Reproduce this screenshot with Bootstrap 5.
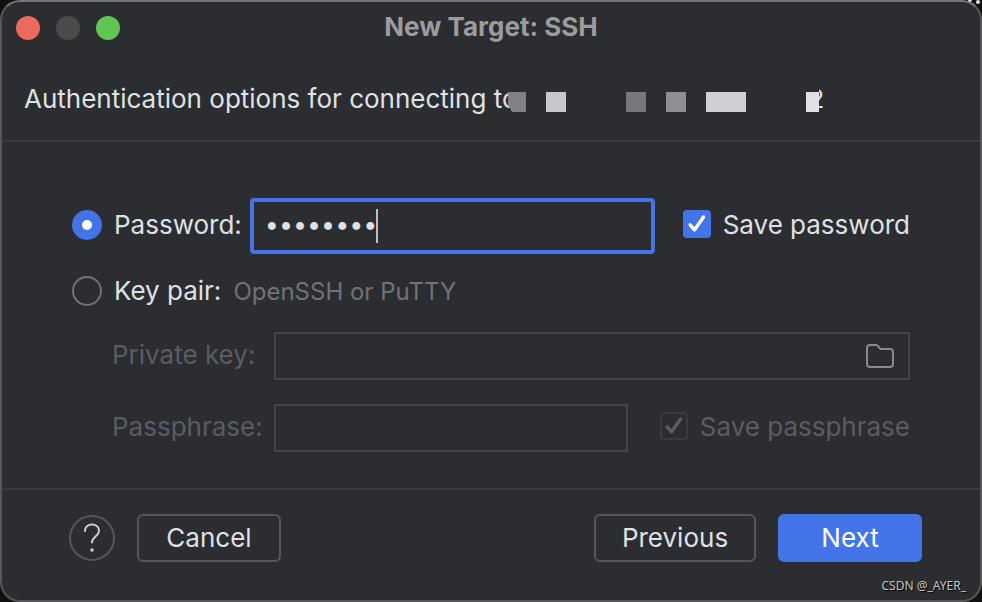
<!DOCTYPE html>
<html lang="en" data-bs-theme="dark">
<head>
<meta charset="utf-8">
<meta name="viewport" content="width=device-width, initial-scale=1">
<title>New Target: SSH</title>
<link href="https://cdn.jsdelivr.net/npm/bootstrap@5.3.0/dist/css/bootstrap.min.css" rel="stylesheet">
<style>
  :root {
    --win: #2b2d30;
    --line: #393b40;
    --frame: #55575a;
    --text: #dfe1e5;
    --muted: #6f737a;
    --off: #5a5d63;
    --blue: #4375e8;
  }
  body { background: #111113; color: var(--text); font: 26px/32px Inter, "Liberation Sans", sans-serif; }
  .dialog { background: var(--win); border: 2px solid var(--frame); border-top-color: #747678; border-radius: 20px; }
  .desk-specks { width: 14px; height: 8px; }
  .titlebar { height: 52px; padding: 0 14px; }
  .titlebar h1 { font-size: 26px; line-height: 32px; font-weight: 700; color: #9b9c9e; padding-bottom: 2px; }
  .light { width: 24px; height: 24px; border: 0; padding: 0; border-radius: 50%; }
  .light-close { background: #ed6a5e; }
  .light-min { background: #4a4b4d; }
  .light-zoom { background: #61c554; }
  .spacer { width: 104px; }
  .intro { padding: 26px 22px 20px; border-bottom: 2px solid var(--line); height: 88px; line-height: 38px; }
  .intro h2 { font-size: 26px; line-height: 38px; font-weight: 400; color: var(--text); }
  .mosaic { margin-left: -10px; }
  .tail { margin-left: -11px; }
  .options { padding: 56px 70px 36px; }
  .options label { padding-bottom: 2px; }
  .options .choice { width: 30px; height: 30px; margin: 0 0 2px; border: 2px solid var(--muted); background-color: transparent; }
  .options .choice:checked { border-color: var(--blue); background-color: var(--blue); background-size: 20px 20px; }
  .tick { width: 28px; height: 28px; appearance: none; border-radius: 4px; border: 2px solid var(--line); margin: 0; }
  .tick-on { background: var(--blue); border-color: var(--blue); }
  .tick-box { width: 28px; height: 28px; }
  .tick-box svg { pointer-events: none; }
  .tick-box-up { margin-bottom: 4px; }
  .field { background: transparent; color: var(--text); border: 2px solid #43454a; height: 48px; min-width: 0; outline: 0; }
  .field-focus { border: 4px solid var(--blue); border-radius: 4px; height: 56px; padding: 0 12px 4px 11px; font-size: 25px; }
  .caret { left: 126px; width: 2px; height: 34px; background: #bcbec4; }
  .gap-label { gap: 12px; }
  .save-password { padding-left: 28px; }
  .key-pair { margin: 21px 0 23px; }
  .hint { font-size: 24px; color: var(--muted); }
  .off { color: var(--off); }
  .key-row { padding-left: 40px; }
  .key-label { width: 162px; }
  .footer { border-top: 2px solid var(--line); padding: 24px 14px 6px 67px; }
  .help { width: 46px; height: 46px; border: 2px solid #54565a; border-radius: 50%; background: transparent; padding: 0; }
  .act { height: 48px; width: 144px; padding: 0; font-size: 26px; line-height: 32px; border: 2px solid #54565a; border-radius: 6px; color: var(--text); }
  .act-wide { width: 162px; }
  .act-main { background: var(--blue); border-color: var(--blue); color: #fff; }
  .actions { padding-right: 44px; gap: 22px; }
  .sign { font: 12px/16px "Noto Sans", sans-serif; color: #c4c5c6; text-shadow: 1px 1px 1px #000; }
</style>
</head>
<body>
<svg class="desk-specks position-absolute top-0 end-0" viewBox="0 0 14 8" aria-hidden="true"><circle cx="2" cy="0" r="2" fill="#ddd"/><circle cx="10" cy="2" r="2" fill="#ddd"/></svg>
<main class="dialog min-vh-100 d-flex flex-column">
  <header class="titlebar d-flex align-items-center justify-content-between">
    <div class="spacer d-flex justify-content-between">
      <button class="light light-close" type="button" aria-label="Close"></button>
      <button class="light light-min" type="button" aria-label="Minimize" disabled></button>
      <button class="light light-zoom" type="button" aria-label="Zoom"></button>
    </div>
    <h1 class="m-0">New Target: SSH</h1>
    <div class="spacer"></div>
  </header>

  <section class="intro d-flex">
    <h2 class="m-0 text-nowrap">Authentication options for connecting to</h2>
    <svg class="mosaic position-relative z-1 flex-shrink-0" width="312" height="36" viewBox="0 0 312 36" aria-hidden="true">
      <path d="M0 12h18v20H4L0 25z" fill="#808184"/>
      <path d="M38 12h20v20H38z" fill="#c6c7cb"/>
      <path d="M118 12h20v20h-20z" fill="#77787b"/>
      <path d="M158 12h20v20h-20z" fill="#8e8f92"/>
      <path d="M198 12h40v20h-40z" fill="#cfd0d4"/>
      <path d="M296 0h15v36h-15z" fill="#2b2d30"/>
      <path d="M298 12h13v20h-13z" fill="#dfe1e5"/>
    </svg>
    <span class="tail">2</span>
  </section>

  <form class="d-flex flex-column flex-grow-1">
    <section class="options flex-grow-1">
      <div class="d-flex align-items-center">
        <div class="d-flex align-items-center gap-label me-2">
          <input class="choice form-check-input flex-shrink-0" type="radio" name="auth" id="authPassword" checked>
          <label for="authPassword">Password:</label>
        </div>
        <div class="position-relative d-flex align-items-center flex-grow-1">
          <input class="field field-focus w-100" type="password" value="password" aria-label="Password">
          <span class="caret position-absolute"></span>
        </div>
        <div class="save-password d-flex align-items-center gap-label">
          <span class="tick-box tick-box-up position-relative d-flex">
            <input class="tick tick-on" type="checkbox" id="savePassword" checked>
            <svg class="position-absolute top-0 start-0" width="28" height="28" viewBox="0 0 28 28" fill="none" stroke="#fff" stroke-width="3.4" stroke-linecap="round" stroke-linejoin="round"><path d="M7.2 14.8l4.3 5.2 9-13"/></svg>
          </span>
          <label class="text-nowrap" for="savePassword">Save password</label>
        </div>
      </div>

      <div class="key-pair d-flex align-items-center gap-label">
        <input class="choice form-check-input flex-shrink-0" type="radio" name="auth" id="authKey">
        <label for="authKey">Key pair:</label>
        <span class="hint">OpenSSH or PuTTY</span>
      </div>

      <div class="key-row d-flex align-items-center off">
        <label class="key-label flex-shrink-0" for="privateKey">Private key:</label>
        <div class="position-relative d-flex align-items-center flex-grow-1">
          <input class="field w-100" type="text" id="privateKey" disabled>
          <svg class="position-absolute end-0 me-3" width="28" height="24" viewBox="0 0 28 24" fill="none" stroke="#868a91" stroke-width="2" stroke-linejoin="round"><path d="M1 4a3 3 0 0 1 3-3h6a2 2 0 0 1 1.5.7L14.5 5H24a3 3 0 0 1 3 3v12a3 3 0 0 1-3 3H4a3 3 0 0 1-3-3z"/></svg>
        </div>
      </div>

      <div class="key-row d-flex align-items-center off mt-4">
        <label class="key-label flex-shrink-0" for="passphrase">Passphrase:</label>
        <input class="field flex-grow-1" type="password" id="passphrase" disabled>
        <div class="d-flex align-items-center gap-label ms-4 ps-2">
          <span class="tick-box tick-box-up position-relative d-flex">
            <input class="tick" type="checkbox" id="savePassphrase" checked disabled>
            <svg class="position-absolute top-0 start-0" width="28" height="28" viewBox="0 0 28 28" fill="none" stroke="#5a5d63" stroke-width="3.4" stroke-linecap="round" stroke-linejoin="round"><path d="M7.2 14.8l4.3 5.2 9-13"/></svg>
          </span>
          <label class="text-nowrap" for="savePassphrase">Save passphrase</label>
        </div>
      </div>
    </section>

    <footer class="footer">
      <div class="actions d-flex align-items-center">
        <button class="help d-flex align-items-center justify-content-center" type="button" aria-label="Help">
          <svg width="18" height="30" viewBox="0 0 18 30" fill="none" stroke="#ced0d6" stroke-width="2" stroke-linecap="round"><path d="M2 8c0-4 3-6.500 7-6.500S16 4 16 8c0 5-7 5.500-7 11.500"/><circle cx="9" cy="27" r="1.700" fill="#ced0d6" stroke="none"/></svg>
        </button>
        <button class="act btn" type="button">Cancel</button>
        <button class="act act-wide btn ms-auto" type="button">Previous</button>
        <button class="act act-main btn" type="submit">Next</button>
      </div>
      <div class="sign text-end mt-3">CSDN @_AYER_</div>
    </footer>
  </form>
</main>
<script src="https://cdn.jsdelivr.net/npm/bootstrap@5.3.0/dist/js/bootstrap.bundle.min.js"></script>
</body>
</html>
